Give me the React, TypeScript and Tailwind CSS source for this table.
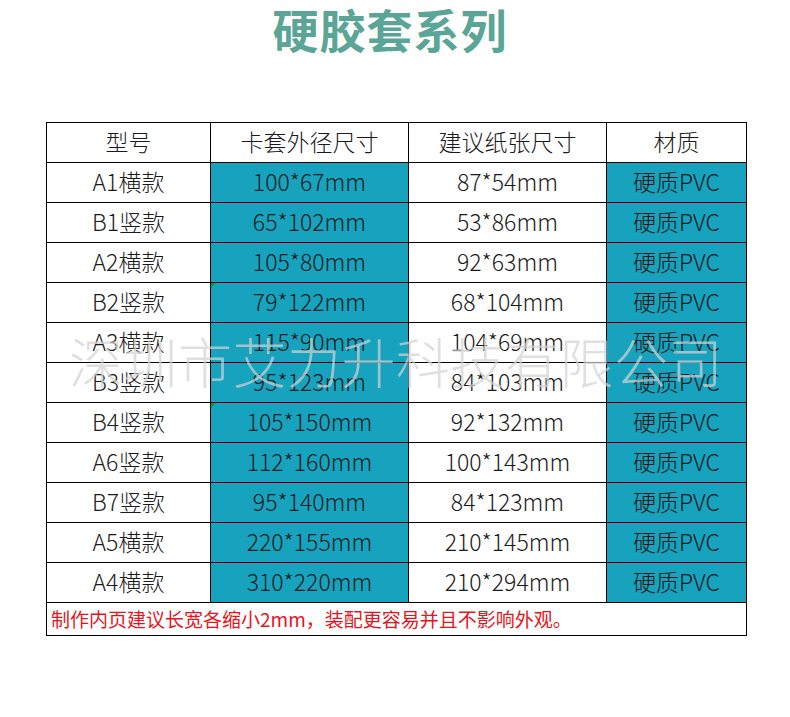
const rows: [string, string, string][] = [
  ["A1横款", "100*67mm", "87*54mm"],
  ["B1竖款", "65*102mm", "53*86mm"],
  ["A2横款", "105*80mm", "92*63mm"],
  ["B2竖款", "79*122mm", "68*104mm"],
  ["A3横款", "115*90mm", "104*69mm"],
  ["B3竖款", "95*123mm", "84*103mm"],
  ["B4竖款", "105*150mm", "92*132mm"],
  ["A6竖款", "112*160mm", "100*143mm"],
  ["B7竖款", "95*140mm", "84*123mm"],
  ["A5横款", "220*155mm", "210*145mm"],
  ["A4横款", "310*220mm", "210*294mm"],
];

// rows with the little green excel marker in the corner
const marked = ["B2竖款", "B4竖款"];

export default function App() {
  return (
    <div className="w-[790px] h-[717px] bg-white font-['Noto_Sans_CJK_SC',sans-serif] text-[#1a1a1a]">
      <h1 className="h-[58px] pr-[10px] flex items-start justify-center text-[46px] font-bold text-[#5aa595] tracking-[1px] leading-[56px]">
        硬胶套系列
      </h1>
      <div className="relative mt-[64px] ml-[46px] w-[700px]">
        <table className="table-fixed border-collapse w-[700px] text-[23px] font-light leading-none">
          <colgroup>
            <col className="w-[164px]" />
            <col className="w-[198px]" />
            <col className="w-[198px]" />
            <col className="w-[140px]" />
          </colgroup>
          <thead>
            <tr className="h-[40px]">
              <th className="border-[1.5px] border-black font-light text-center pb-[3px]">型号</th>
              <th className="border-[1.5px] border-black font-light text-center pb-[3px]">卡套外径尺寸</th>
              <th className="border-[1.5px] border-black font-light text-center pb-[3px]">建议纸张尺寸</th>
              <th className="border-[1.5px] border-black font-light text-center pb-[3px]">材质</th>
            </tr>
          </thead>
          <tbody>
            {rows.map(([model, outer, paper]) => (
              <tr key={model} className="h-[40px]">
                <td className="border-[1.5px] border-black text-center pb-[3px]">{model}</td>
                <td className="relative border-[1.5px] border-black text-center pb-[3px] bg-[#17a3be]">
                  {marked.includes(model) && (
                    <span className="absolute left-0 top-0 w-0 h-0 border-t-[5px] border-r-[5px] border-t-[#1f8f3a] border-r-transparent" />
                  )}
                  {outer}
                </td>
                <td className="border-[1.5px] border-black text-center pb-[3px]">{paper}</td>
                <td className="border-[1.5px] border-black text-center pb-[3px] bg-[#17a3be]">硬质PVC</td>
              </tr>
            ))}
            <tr className="h-[33px]">
              <td colSpan={4} className="border-[1.5px] border-black px-[4px] pb-[2px] text-left text-[19px] font-normal text-[#e8141b]">
                制作内页建议长宽各缩小2mm，装配更容易并且不影响外观。
              </td>
            </tr>
          </tbody>
        </table>
        <div className="pointer-events-none absolute left-0 right-0 top-[212px] flex justify-center text-[54px] font-light leading-none text-[rgba(210,210,210,0.72)] tracking-[0.5px]">
          深圳市艾力升科技有限公司
        </div>
      </div>
    </div>
  );
}
